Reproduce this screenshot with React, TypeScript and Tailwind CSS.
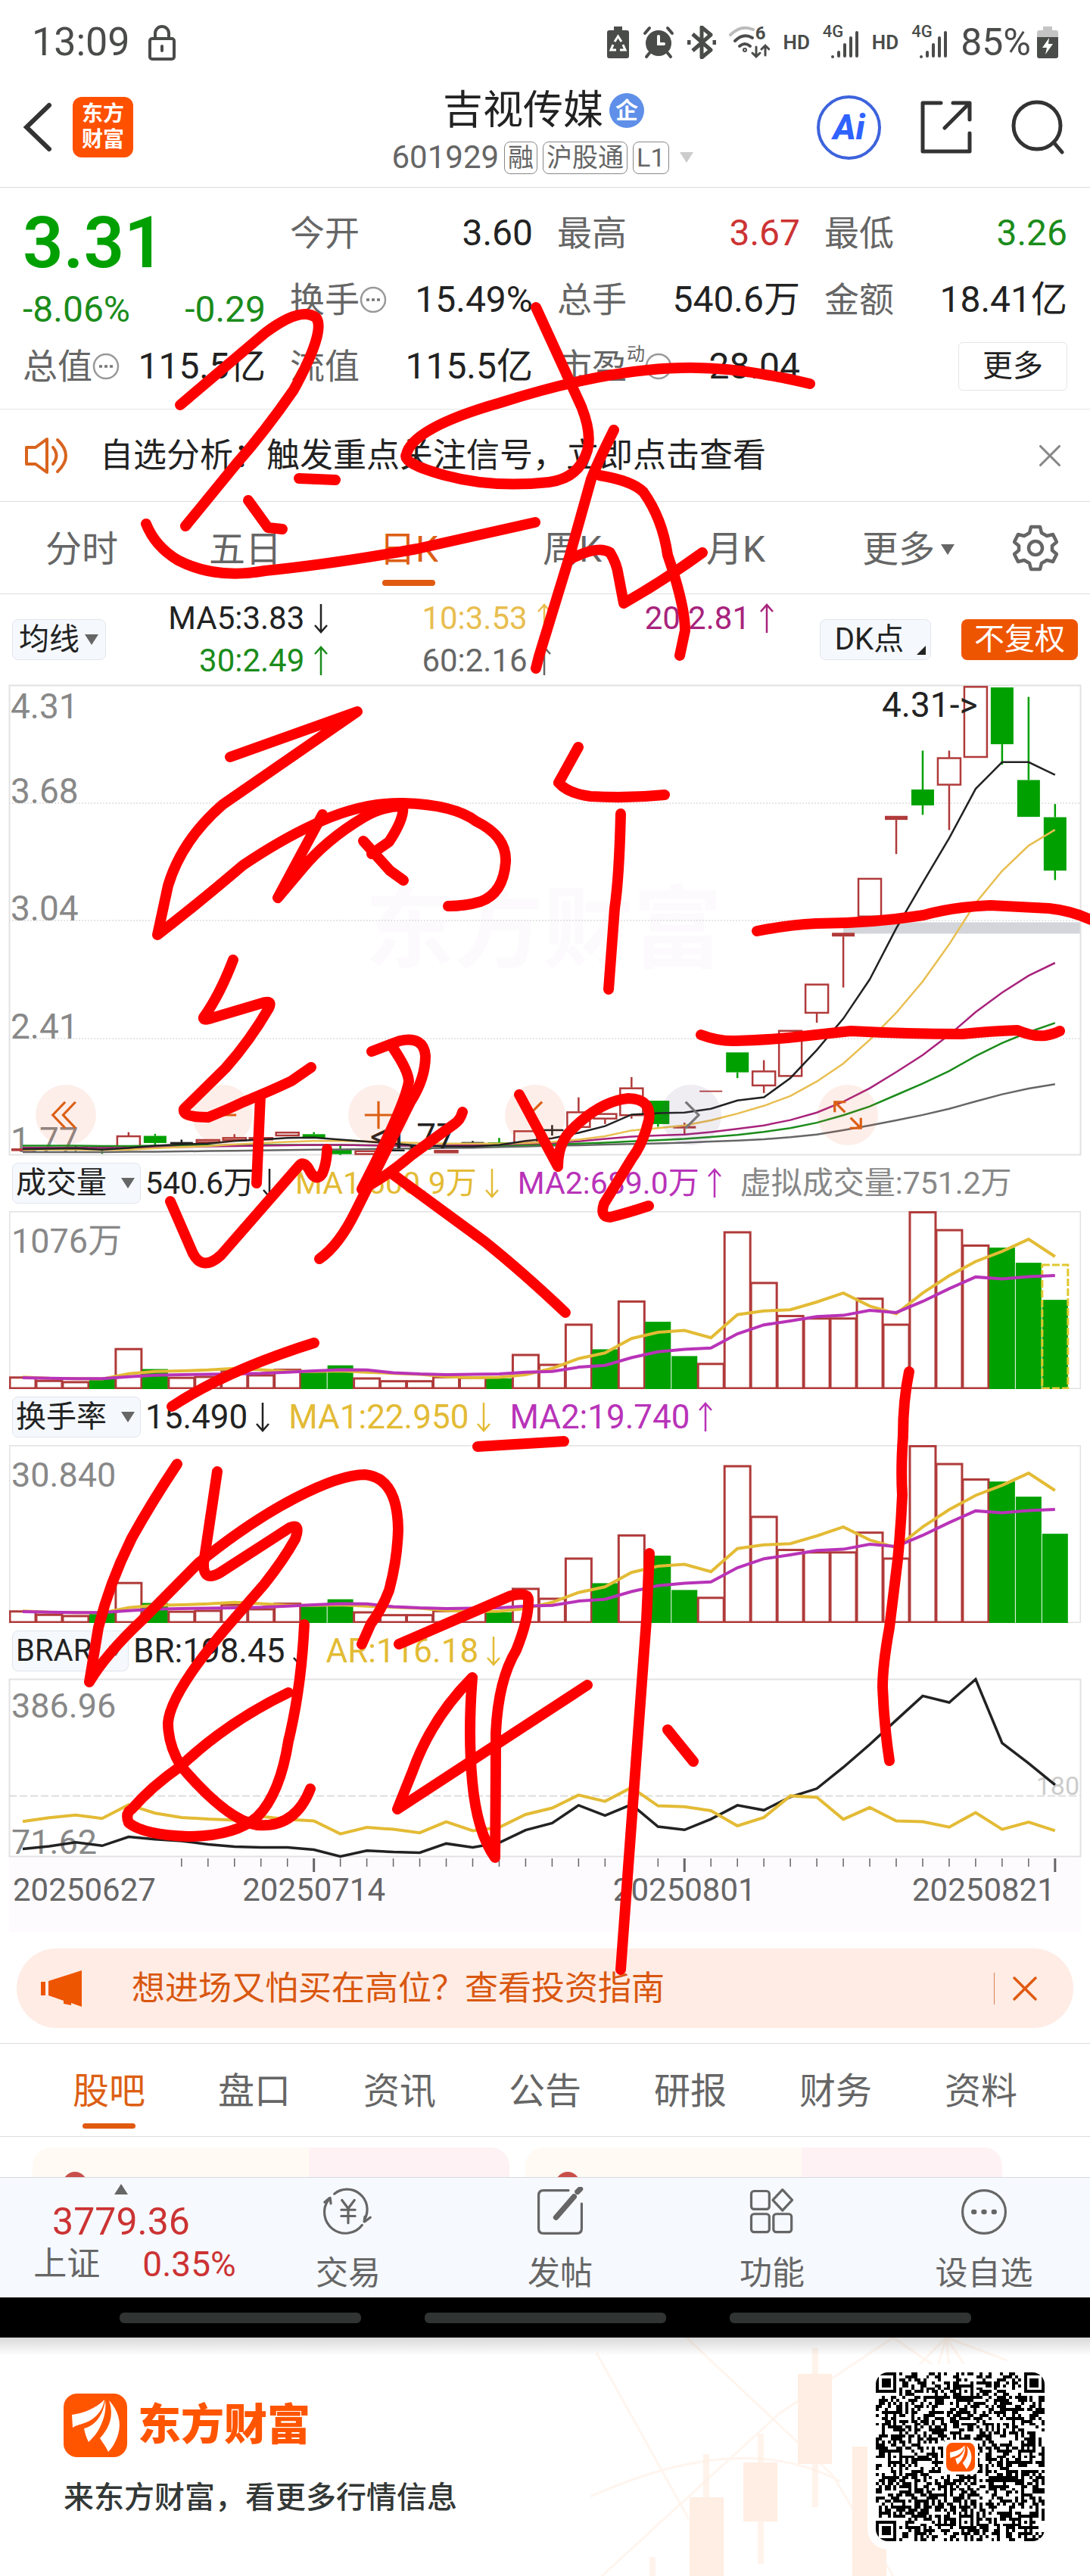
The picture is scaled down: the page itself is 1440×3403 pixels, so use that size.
import type { ReactNode } from 'react';
import clsx from 'clsx';
import { X } from 'lucide-react';

const STEP = 34.97;
const CHART_W = 1416;
const RED = '#b03a3a';
const GREEN = '#00a000';
const INK = '#222222';
const YELLOW = '#e3bb35';
const PURPLE = '#b833b8';

const xAt = (i: number) => 18 + i * STEP;

type Candle = {
  kind: 'up' | 'down' | 'bar' | 'flat';
  top: number;
  bottom: number;
  high?: number;
  low?: number;
};

const CANDLES: Candle[] = [
  { kind: 'bar', top: 1426, bottom: 1434 },
  { kind: 'flat', top: 1428, bottom: 1428 },
  { kind: 'flat', top: 1424, bottom: 1424, high: 1418, low: 1434 },
  { kind: 'down', top: 1418, bottom: 1424, low: 1442 },
  { kind: 'up', top: 1388, bottom: 1430, high: 1378 },
  { kind: 'down', top: 1389, bottom: 1410, high: 1383, low: 1416 },
  { kind: 'flat', top: 1410, bottom: 1410, high: 1400, low: 1416 },
  { kind: 'up', top: 1399, bottom: 1410 },
  { kind: 'up', top: 1393, bottom: 1404, high: 1384 },
  { kind: 'up', top: 1393, bottom: 1399 },
  { kind: 'up', top: 1377, bottom: 1390 },
  { kind: 'down', top: 1384, bottom: 1397, high: 1378 },
  { kind: 'down', top: 1428, bottom: 1443, high: 1414, low: 1446 },
  { kind: 'up', top: 1432, bottom: 1445 },
  { kind: 'flat', top: 1432, bottom: 1432, high: 1424 },
  { kind: 'down', top: 1424, bottom: 1430 },
  { kind: 'up', top: 1431, bottom: 1440 },
  { kind: 'flat', top: 1410, bottom: 1410, high: 1404, low: 1416 },
  { kind: 'down', top: 1408, bottom: 1412, high: 1395 },
  { kind: 'up', top: 1373, bottom: 1412 },
  { kind: 'flat', top: 1372, bottom: 1372, high: 1357, low: 1388 },
  { kind: 'up', top: 1317, bottom: 1365, high: 1275 },
  { kind: 'up', top: 1322, bottom: 1340, low: 1354 },
  { kind: 'up', top: 1246, bottom: 1330, high: 1215, low: 1338 },
  { kind: 'down', top: 1285, bottom: 1354, low: 1362 },
  { kind: 'bar', top: 1360, bottom: 1367, high: 1350, low: 1384 },
  { kind: 'bar', top: 1255, bottom: 1259 },
  { kind: 'down', top: 1142, bottom: 1201, low: 1218 },
  { kind: 'up', top: 1196, bottom: 1242, high: 1165, low: 1262 },
  { kind: 'up', top: 1076, bottom: 1214 },
  { kind: 'up', top: 939, bottom: 1027, low: 1054 },
  { kind: 'bar', top: 788, bottom: 799, low: 950 },
  { kind: 'up', top: 626, bottom: 742 },
  { kind: 'bar', top: 442, bottom: 454, low: 555 },
  { kind: 'down', top: 364, bottom: 411, high: 249, low: 439 },
  { kind: 'up', top: 269, bottom: 352, high: 249, low: 484 },
  { kind: 'up', top: 58, bottom: 270 },
  { kind: 'down', top: 62, bottom: 230, low: 290 },
  { kind: 'down', top: 336, bottom: 445, high: 90 },
  { kind: 'down', top: 446, bottom: 604, high: 407, low: 632 },
];

const MA_LINES = [
  {
    color: '#666666',
    points: [1437, 1437, 1437, 1437, 1436, 1436, 1435, 1434, 1433, 1432, 1431, 1430, 1429, 1428, 1427, 1426, 1425, 1424, 1422, 1420, 1418, 1417, 1415, 1413, 1411, 1409, 1406, 1403, 1399, 1393, 1385, 1372, 1358, 1343, 1327, 1309, 1287, 1266, 1249, 1236],
  },
  {
    color: '#1b8c1b',
    points: [1418, 1418, 1418, 1419, 1419, 1418, 1418, 1417, 1417, 1416, 1416, 1416, 1416, 1417, 1418, 1418, 1418, 1418, 1417, 1416, 1414, 1412, 1409, 1405, 1402, 1398, 1392, 1386, 1377, 1366, 1350, 1328, 1302, 1268, 1234, 1197, 1153, 1114, 1082, 1055],
  },
  {
    color: '#a8237c',
    points: [1424, 1424, 1424, 1425, 1424, 1423, 1422, 1420, 1419, 1418, 1417, 1416, 1416, 1417, 1418, 1418, 1418, 1417, 1415, 1412, 1410, 1405, 1398, 1391, 1388, 1385, 1378, 1368, 1358, 1342, 1320, 1288, 1248, 1200, 1150, 1090, 1023, 965, 915, 877],
  },
  {
    color: '#e8be50',
    points: [1430, 1430, 1430, 1431, 1430, 1426, 1422, 1419, 1414, 1410, 1407, 1404, 1404, 1406, 1408, 1410, 1412, 1412, 1412, 1410, 1407, 1400, 1390, 1373, 1366, 1358, 1343, 1323, 1300, 1271, 1228, 1175, 1105, 1025, 932, 822, 700, 605, 530, 483],
  },
  {
    color: INK,
    points: [1428, 1427, 1426, 1430, 1425, 1418, 1414, 1412, 1404, 1400, 1395, 1394, 1400, 1406, 1412, 1418, 1420, 1420, 1416, 1404, 1396, 1380, 1360, 1326, 1322, 1320, 1309, 1284, 1275, 1218, 1135, 1042, 926, 775, 640, 508, 362, 283, 283, 321],
  },
];

const VOLUME_TOPS = [707, 718, 722, 714, 615, 682, 708, 705, 686, 700, 682, 693, 670, 710, 719, 719, 706, 708, 712, 634, 666, 536, 618, 461, 529, 640, 663, 237, 401, 508, 516, 516, 452, 536, 172, 230, 280, 289, 338, 458];
const VOLUME_DOWN = [3, 5, 11, 12, 18, 22, 24, 25, 37, 38, 39];
const VOLUME_MA1 = [708, 712, 713, 714, 697, 690, 688, 685, 680, 684, 690, 690, 688, 692, 696, 699, 706, 710, 709, 700, 680, 648, 630, 583, 563, 557, 581, 506, 494, 490, 465, 436, 478, 503, 436, 380, 334, 301, 262, 318];
const VOLUME_MA2 = [710, 712, 713, 713, 707, 702, 700, 699, 698, 696, 692, 688, 684, 685, 694, 698, 700, 699, 698, 692, 690, 676, 670, 645, 626, 618, 614, 568, 539, 526, 512, 508, 492, 499, 463, 422, 384, 390, 383, 379];

const BR_LINE = [848, 838, 823, 836, 803, 812, 818, 831, 839, 842, 842, 851, 876, 854, 859, 862, 828, 842, 825, 778, 752, 686, 724, 683, 765, 777, 737, 686, 704, 655, 624, 545, 460, 370, 280, 304, 218, 455, 530, 610];
const AR_LINE = [746, 732, 722, 735, 684, 715, 731, 737, 741, 727, 738, 744, 792, 768, 775, 788, 747, 780, 768, 720, 696, 648, 671, 620, 688, 691, 706, 762, 731, 651, 656, 738, 694, 744, 747, 767, 713, 775, 748, 780];

const priceY = (v: number) => (v - 55) / 2.24;
const volumeY = (v: number) => (v - 171) / 2.45;
const brarY = (v: number) => (v - 217) / 2.81;

const toPoints = (values: number[], y: (v: number) => number) =>
  values.map((v, i) => `${xAt(i).toFixed(1)},${y(v).toFixed(1)}`).join(' ');

function Arrow({ up }: { up?: boolean }) {
  return (
    <svg viewBox="0 0 20 40" className="h-10 w-5 shrink-0" fill="none" stroke="currentColor" strokeWidth="2.5">
      <path d={up ? 'M10 39V2M2 11L10 2L18 11' : 'M10 1V38M2 29L10 38L18 29'} />
    </svg>
  );
}

function Triangle({ className }: { className?: string }) {
  return (
    <svg viewBox="0 0 18 14" className={clsx('h-3.5 shrink-0', className ?? 'w-[18px]')} fill="currentColor">
      <path d="M0 0H18L9 14Z" />
    </svg>
  );
}

function MoreDots() {
  return (
    <svg viewBox="0 0 36 36" className="size-9 shrink-0" fill="none" stroke="#999" strokeWidth="2.5">
      <circle cx="18" cy="18" r="16" />
      <path d="M9 18h4M16 18h4M23 18h4" stroke="#777" strokeWidth="3.5" />
    </svg>
  );
}

function BrandMark({ className }: { className?: string }) {
  return (
    <svg viewBox="0 0 84 84" className={className}>
      <rect width="84" height="84" rx="18" fill="#ff5500" />
      <g fill="#fff">
        <path d="M11 28C26 26 42 20 54 8C52 24 40 34 30 38C22 41 16 42 12 45Z" />
        <path d="M55 9C57 24 52 38 45 50C41 56 37 60 33 64C30 58 28 52 27 46C38 44 52 32 55 9Z" />
        <path d="M60 9C72 22 77 38 72 54C69 64 64 72 59 77C56 70 51 64 48 59C58 48 68 32 60 9Z" />
      </g>
    </svg>
  );
}

type PickerProps = { label: string; options: string[]; className: string; tight?: boolean };

function Picker({ label, options, className, tight }: PickerProps) {
  return (
    <span className={clsx('relative flex h-[54px] items-center', className)}>
      <select
        aria-label={label}
        className={clsx(
          'size-full appearance-none rounded-lg border border-[#e1e5eb] bg-[#f5f9fe] text-[40px] leading-[50px] text-[#222]',
          tight ? 'pl-2' : 'pl-1'
        )}
      >
        {options.map((o) => (
          <option key={o}>{o}</option>
        ))}
      </select>
      <Triangle className={clsx('pointer-events-none absolute w-[18px] text-[#666]', tight ? 'right-2.5' : 'right-2')} />
    </span>
  );
}

/* ---------- status bar ---------- */

function Signal() {
  return (
    <span className="relative block h-11 w-12 text-[#4a4c4a]">
      <span className="absolute -top-1 left-0 text-[22px] font-medium leading-6">4G</span>
      <svg viewBox="0 0 48 44" className="size-full" stroke="currentColor" strokeWidth="4" strokeLinecap="round">
        <path d="M13 41v0M21 40V35M29 40V25M37 40V16M45 40V9" />
      </svg>
    </span>
  );
}

function StatusBar() {
  return (
    <div className="flex h-[108px] items-center justify-between px-[42px] pt-1 text-[#4a4c4a]">
      <div className="flex items-center gap-6">
        <span className="text-[52px]">13:09</span>
        <svg viewBox="0 0 36 48" className="h-12 w-9" fill="none" stroke="currentColor" strokeWidth="4">
          <rect x="2" y="19" width="32" height="27" rx="3" />
          <path d="M9 18V12a9 9 0 0 1 18 0v6M18 29v6" strokeLinecap="round" />
        </svg>
      </div>
      <div className="flex items-center gap-[17px]">
        <svg viewBox="0 0 31 44" className="h-11 w-[31px]">
          <path d="M10 1h11v5h6q3 0 3 3v31q0 3-3 3H4q-3 0-3-3V9q0-3 3-3h6Z" fill="currentColor" />
          <path d="M11 21L15.500 14L20 21M22 25l3 7H18M9 25l-3 7h7" fill="none" stroke="#fff" strokeWidth="3" />
        </svg>
        <svg viewBox="0 0 42 44" className="h-11 w-[42px]" stroke="currentColor" strokeWidth="4" strokeLinecap="round">
          <circle cx="21" cy="23" r="15" fill="currentColor" />
          <path d="M3 10l6-7M39 10l-6-7M9 36l-4 5M33 36l4 5" />
          <path d="M21 14v10h7" fill="none" stroke="#fff" />
        </svg>
        <svg viewBox="0 0 38 44" className="h-11 w-[38px]" fill="none" stroke="currentColor" strokeWidth="5" strokeLinejoin="round">
          <path d="M7 11L31 32L19 42V2L31 12L7 33" />
          <path d="M2 19v6M36 19v6" />
        </svg>
        <span className="relative block h-11 w-[54px]">
          <svg viewBox="0 0 54 44" className="size-full" fill="none" stroke="currentColor" strokeWidth="4" strokeLinecap="round">
            <path d="M2 12Q16 -2 32 5" stroke="#bbb" />
            <path d="M8 20Q19 9 31 16M14 27q7-6 14 0" />
            <circle cx="21" cy="32" r="1" />
            <path d="M36 28v13m-5-5l5 5 5-5M48 39V26m-5 5l5-5 5 5" strokeWidth="3" />
          </svg>
          <span className="absolute -top-1 right-1.5 text-2xl font-bold leading-7">6</span>
        </span>
        <span className="text-[26px] font-semibold">HD</span>
        <Signal />
        <span className="text-[26px] font-semibold">HD</span>
        <Signal />
        <span className="flex items-center gap-2">
          <span className="text-[50px]">85%</span>
          <svg viewBox="0 0 28 44" className="h-11 w-7">
            <path d="M8 1h12v5h5q3 0 3 3v6H0V9q0-3 3-3h5Z" fill="#c4c4c4" />
            <path d="M0 15h28v25q0 3-3 3H3q-3 0-3-3Z" fill="currentColor" />
            <path d="M16 16L7 29h6l-2 9 10-14h-6Z" fill="#fff" />
          </svg>
        </span>
      </div>
    </div>
  );
}

/* ---------- title bar ---------- */

function Tag({ children }: { children: ReactNode }) {
  return (
    <span className="flex h-[43px] items-center rounded-lg border border-[#888] px-1 text-[34px] text-[#666]">
      {children}
    </span>
  );
}

function TitleBar() {
  return (
    <header className="flex items-center border-b border-[#ddd] pb-[7px] pl-[30px] pr-[34px] pt-1">
      <div className="flex flex-1 items-center gap-[26px] pb-4">
        <button aria-label="返回">
          <svg viewBox="0 0 40 66" className="h-[66px] w-10" fill="none" stroke="#333" strokeWidth="6" strokeLinecap="round">
            <path d="M35 4L5 33L35 62" />
          </svg>
        </button>
        <a
          href="#home"
          className="flex size-20 flex-col items-center justify-center rounded-xl bg-[#ff5000] text-[28px] font-bold leading-[34px] text-white"
        >
          <span>东方</span>
          <span>财富</span>
        </a>
      </div>
      <div className="flex flex-col items-center">
        <h1 className="flex h-16 items-center gap-2 pt-1 text-[53px] text-[#222]">
          吉视传媒
          <span className="flex size-[46px] items-center justify-center rounded-full bg-[#5f8fe8] text-[30px] font-bold text-white">
            企
          </span>
        </h1>
        <div className="flex h-16 items-center gap-[7px] text-[42px] text-[#666]">
          601929
          <Tag>融</Tag>
          <Tag>沪股通</Tag>
          <Tag>L1</Tag>
          <Triangle className="ml-1 w-6 text-[#ccc]" />
        </div>
      </div>
      <div className="flex flex-1 items-center justify-end gap-[52px] pb-4">
        <button
          aria-label="Ai"
          className="flex size-[85px] items-center justify-center rounded-full border-4 border-[#3d63dc] text-[46px] font-extrabold italic text-[#2f62ff]"
        >
          Ai
        </button>
        <button aria-label="分享">
          <svg viewBox="0 0 68 70" className="h-[70px] w-[68px]" fill="none" stroke="#333" strokeWidth="5" strokeLinecap="round" strokeLinejoin="round">
            <path d="M27 3H3V67H65V43M43 3H65V25M64 4L32 36" />
          </svg>
        </button>
        <button aria-label="搜索">
          <svg viewBox="0 0 70 72" className="h-[72px] w-[70px]" fill="none" stroke="#333" strokeWidth="5" strokeLinecap="round">
            <circle cx="34" cy="34" r="31" />
            <path d="M56 56L67 69" />
          </svg>
        </button>
      </div>
    </header>
  );
}

/* ---------- quote ---------- */

type StatProps = { label: ReactNode; value: string; tone?: 'up' | 'down'; dots?: boolean };

function Stat({ label, value, tone, dots }: StatProps) {
  return (
    <div className="flex h-[88px] items-center justify-between whitespace-nowrap">
      <span className="flex items-center text-[46px] text-[#666]">
        {label}
        {dots && <MoreDots />}
      </span>
      <span
        className={clsx(
          'text-[48px]',
          tone === 'up' && 'text-[#cc3333]',
          tone === 'down' && 'text-[#1b8c1b]',
          !tone && 'text-[#222]'
        )}
      >
        {value}
      </span>
    </div>
  );
}

function Quote() {
  return (
    <section className="grid grid-cols-4 gap-x-8 border-b border-[#e6e6e6] px-[30px] pb-3 pt-4">
      <div className="row-span-2">
        <p className="text-[94px] font-semibold leading-[114px] text-[#00a000]">3.31</p>
        <p className="flex justify-between text-[48px] leading-[62px] text-[#1b8c1b]">
          <span>-8.06%</span>
          <span>-0.29</span>
        </p>
      </div>
      <Stat label="今开" value="3.60" />
      <Stat label="最高" value="3.67" tone="up" />
      <Stat label="最低" value="3.26" tone="down" />
      <Stat label="换手" value="15.49%" dots />
      <Stat label="总手" value="540.6万" />
      <Stat label="金额" value="18.41亿" />
      <Stat label="总值" value="115.5亿" dots />
      <Stat label="流值" value="115.5亿" />
      <Stat
        label={
          <>
            市盈<sup className="-top-4 text-2xl">动</sup>
          </>
        }
        value="28.04"
        dots
      />
      <div className="flex items-center justify-end">
        <button className="h-16 w-36 rounded-md border border-[#e5e5e5] text-[40px] text-[#222]">更多</button>
      </div>
    </section>
  );
}

function Notice() {
  return (
    <section className="flex h-[122px] items-center border-b border-[#ddd] pl-8 pr-7">
      <svg viewBox="0 0 60 50" className="h-[50px] w-[60px]" fill="none" stroke="#d8641e" strokeWidth="4" strokeLinejoin="round">
        <path d="M3 14H15L30 3V47L15 36H3Z" />
        <path d="M38 14q9 11 0 22M44 4q22 21 0 42" strokeLinecap="round" />
      </svg>
      <a href="#analysis" className="ml-10 flex-1 text-[44px] text-[#222]">
        自选分析：触发重点关注信号，立即点击查看
      </a>
      <button aria-label="关闭">
        <X className="size-[50px] text-[#888]" strokeWidth={1.5} />
      </button>
    </section>
  );
}

function PeriodTabs() {
  return (
    <nav className="flex h-[122px] items-center border-b border-[#ddd] text-[48px] text-[#666]">
      {['分时', '五日', '日K', '周K', '月K'].map((t) => (
        <a
          key={t}
          href="#kline"
          className={clsx('relative flex h-full w-[15%] items-center justify-center pt-1', t === '日K' && 'text-[#dc5f14]')}
        >
          {t}
          {t === '日K' && <span className="absolute bottom-2.5 h-2 w-[70px] rounded-sm bg-[#e05a10]" />}
        </a>
      ))}
      <button className="flex flex-1 items-center justify-center gap-2 pl-6 pt-1">
        更多
        <Triangle />
      </button>
      <button aria-label="设置" className="flex w-[10%] justify-center">
        <svg viewBox="0 0 60 62" className="h-[62px] w-[60px]" fill="none" stroke="#666" strokeWidth="4.500" strokeLinejoin="round">
          <path d="M24 3H36L38 11L45 15L53 13L58 23L52 28V34L58 39L53 49L45 47L38 51L36 59H24L22 51L15 47L7 49L2 39L8 34V28L2 23L7 13L15 15L22 11Z" />
          <circle cx="30" cy="31" r="9" />
        </svg>
      </button>
    </nav>
  );
}

const AVERAGES = [
  { text: 'MA5:3.83', up: false, tone: 'text-[#222]' },
  { text: '10:3.53', up: true, tone: 'text-[#e8be50]' },
  { text: '20:2.81', up: true, tone: 'text-[#a8237c]' },
  { text: '30:2.49', up: true, tone: 'text-[#1b8c1b]' },
  { text: '60:2.16', up: true, tone: 'text-[#666]' },
];

function AverageBar() {
  return (
    <div className="flex items-center px-4 py-1">
      <Picker label="主图指标" options={['均线']} className="w-[124px]" tight />
      <div className="grid flex-1 grid-cols-3">
        {AVERAGES.map((a) => (
          <span key={a.text} className={clsx('flex h-14 items-center justify-end gap-3 text-[42px]', a.tone)}>
            {a.text}
            <Arrow up={a.up} />
          </span>
        ))}
      </div>
      <button className="relative ml-15 h-[54px] w-[147px] rounded-lg border border-[#e1e5eb] bg-[#f5f9fe] pr-4 text-[40px] leading-[50px] text-[#222]">
        DK点
        <svg viewBox="0 0 12 12" className="absolute bottom-1.5 right-1.5 size-3">
          <path d="M12 0V12H0Z" fill="#222" />
        </svg>
      </button>
      <button className="ml-10 h-[54px] w-[154px] rounded-lg bg-[#ee5500] text-[40px] leading-[54px] text-white">不复权</button>
    </div>
  );
}

/* ---------- charts ---------- */

function CandleShape({ c, i }: { c: Candle; i: number }) {
  const x = xAt(i);
  const top = priceY(c.top);
  const bottom = priceY(c.bottom);
  const color = c.kind === 'down' ? GREEN : c.kind === 'flat' ? INK : RED;
  return (
    <g stroke={color} strokeWidth="2.5" fill="none">
      {c.high && <path d={`M${x} ${priceY(c.high)}V${top}`} />}
      {c.low && <path d={`M${x} ${bottom}V${priceY(c.low)}`} />}
      {c.kind === 'up' && <rect x={x - 15} y={top + 1} width="30" height={Math.max(bottom - top - 2, 2)} />}
      {(c.kind === 'down' || c.kind === 'bar') && (
        <rect x={x - 15} y={top} width="30" height={bottom - top} fill={color} stroke="none" />
      )}
      {c.kind === 'flat' && <path d={`M${x - 15} ${top}H${x + 15}`} />}
    </g>
  );
}

const FLOAT_ICONS = [
  'M21 3L3 22L21 41M36 3L18 22L36 41',
  'M2 22H42',
  'M2 22H42M22 2V42',
  'M32 3L13 22L32 41',
  'M14 3L33 22L14 41',
  'M3 18V3H19M4 4L18 18M41 26V41H25M40 40L26 26',
];
const FLOAT_LABELS = ['最左', '缩小', '放大', '左移', '右移', '全屏'];

function PriceChart() {
  return (
    <div className="relative mx-3">
      <svg viewBox={`0 0 ${CHART_W} 621`} className="block h-auto w-full overflow-visible">
        <text x="470" y="364" fontSize="118" fontWeight="700" fill="#fdfafd">
          东方财富
        </text>
        <rect x={xAt(31)} y={priceY(757)} width={CHART_W - xAt(31)} height="15" fill="#d3d5da" />
        <path d={`M0 156H${CHART_W}M0 311H${CHART_W}M0 467H${CHART_W}`} stroke="#ccc" strokeDasharray="2 2" />
        <rect x="0.5" y="0.5" width={CHART_W - 1} height="620" fill="none" stroke="#e2e2e2" strokeWidth="2" />
        <g fontSize="46" fill="#888">
          <text x="2" y="44">4.31</text>
          <text x="2" y="156">3.68</text>
          <text x="2" y="311">3.04</text>
          <text x="2" y="467">2.41</text>
          <text x="2" y="617">1.77</text>
        </g>
        {CANDLES.map((c, i) => (
          <CandleShape key={i} c={c} i={i} />
        ))}
        {MA_LINES.map((l) => (
          <polyline key={l.color} points={toPoints(l.points, priceY)} fill="none" stroke={l.color} strokeWidth="2.500" />
        ))}
        <g fontSize="46" fill={INK}>
          <text x="1153" y="42">{'4.31->'}</text>
          <text x="477" y="612">{'<1.77'}</text>
        </g>
      </svg>
      <div className="absolute bottom-[13px] left-[35px] flex w-[1113px] justify-between">
        {FLOAT_ICONS.map((d, i) => (
          <button
            key={d}
            aria-label={FLOAT_LABELS[i]}
            className={clsx(
              'flex size-20 items-center justify-center rounded-full',
              i === 4 ? 'bg-[#604880]/10 text-[#777]' : 'bg-[#f05a28]/10 text-[#dc5f14]'
            )}
          >
            <svg viewBox="0 0 44 44" className="size-10" fill="none" stroke="currentColor" strokeWidth="3.500">
              <path d={d} />
            </svg>
          </button>
        ))}
      </div>
    </div>
  );
}

function VolumeChart({ max, projected }: { max: string; projected?: boolean }) {
  return (
    <svg viewBox={`0 0 ${CHART_W} 235`} className="mx-3 block h-auto w-[calc(100%-24px)]">
      <rect x="0.5" y="0.5" width={CHART_W - 1} height="234" fill="none" stroke="#e2e2e2" strokeWidth="2" />
      <text x="3" y="55" fontSize="45" fill="#888">
        {max}
      </text>
      {VOLUME_TOPS.map((v, i) => {
        const y = volumeY(v);
        return VOLUME_DOWN.includes(i) ? (
          <rect key={i} x={xAt(i) - 17} y={y} width="34" height={235 - y} fill={GREEN} />
        ) : (
          <rect key={i} x={xAt(i) - 17} y={y + 1} width="34" height={233 - y} fill="none" stroke={RED} strokeWidth="3" />
        );
      })}
      {projected && (
        <rect x={xAt(39) - 17} y={volumeY(345)} width="34" height={234 - volumeY(345)} fill="none" stroke="#e0c830" strokeWidth="3" strokeDasharray="10 3" />
      )}
      <polyline points={toPoints(VOLUME_MA1, volumeY)} fill="none" stroke={YELLOW} strokeWidth="4" />
      <polyline points={toPoints(VOLUME_MA2, volumeY)} fill="none" stroke={PURPLE} strokeWidth="4" />
    </svg>
  );
}

function BrarChart() {
  const right = CHART_W - 2;
  return (
    <svg viewBox={`0 0 ${CHART_W} 235`} className="mx-3 block h-auto w-[calc(100%-24px)] overflow-visible">
      <rect x="0.5" y="0.5" width={CHART_W - 1} height="234" fill="none" stroke="#e2e2e2" strokeWidth="2" />
      <path d={`M0 154.500H${CHART_W}`} stroke="#ddd" strokeWidth="2" strokeDasharray="10 4" />
      <g fontSize="45" fill="#888">
        <text x="3" y="51">386.96</text>
        <text x="3" y="231">71.62</text>
      </g>
      <text x={right} y="153" fontSize="34" fill="#ccc" textAnchor="end">
        180
      </text>
      <polyline points={toPoints(BR_LINE, brarY)} fill="none" stroke={INK} strokeWidth="3.500" />
      <polyline points={toPoints(AR_LINE, brarY)} fill="none" stroke={YELLOW} strokeWidth="4" />
    </svg>
  );
}

function DateAxis() {
  const ticks = Array.from({ length: 34 }, (_, k) => k + 6);
  return (
    <svg viewBox={`0 0 ${CHART_W} 100`} className="mx-3 block h-auto w-[calc(100%-24px)] bg-[#fefbff]">
      {ticks.map((i) => {
        const major = [11, 25, 39].includes(i);
        return <path key={i} d={`M${xAt(i)} 2V${major ? 20 : 13}`} stroke="#666" strokeWidth={major ? 3 : 1.5} />;
      })}
      <g fontSize="42" fill="#666">
        <text x="5" y="58">20250627</text>
        <text x={xAt(11)} y="58" textAnchor="middle">20250714</text>
        <text x={xAt(25)} y="58" textAnchor="middle">20250801</text>
        <text x={xAt(39)} y="58" textAnchor="end">20250821</text>
      </g>
    </svg>
  );
}

type Reading = { text: string; tone: string; dir?: 'up' | 'down' };

function IndicatorBar({ name, width, size, readings }: { name: string; width: string; size: string; readings: Reading[] }) {
  return (
    <div className={clsx('flex h-[74px] items-center whitespace-nowrap pl-4', size)}>
      <Picker label="副图指标" options={[name]} className={width} />
      <div className="ml-1.5 flex items-center gap-6">
        {readings.map((r) => (
          <span key={r.text} className={clsx('flex items-center gap-2.5', r.tone)}>
            {r.text}
            {r.dir && <Arrow up={r.dir === 'up'} />}
          </span>
        ))}
      </div>
    </div>
  );
}

/* ---------- lower page ---------- */

function GuideBanner() {
  return (
    <aside className="mx-[22px] mb-5 mt-[21px] flex h-[105px] items-center rounded-full bg-[#feece5] pl-8 pr-9 text-[#d9570f]">
      <svg viewBox="0 0 56 48" className="h-12 w-14" fill="#ee5500">
        <path d="M0 15h6v18H0ZM10 14L54 0V48L40 43V46L30 44V40L10 33Z" />
      </svg>
      <a href="#guide" className="ml-16 flex-1 text-[44px]">
        想进场又怕买在高位？查看投资指南
      </a>
      <span className="h-[42px] w-px bg-[#d9804f]" />
      <button aria-label="关闭" className="ml-3">
        <X className="size-14 text-[#e05a10]" strokeWidth={1.5} />
      </button>
    </aside>
  );
}

function SectionTabs() {
  return (
    <nav className="grid h-[124px] grid-cols-7 border-y border-[#ddd] px-12 text-[48px] text-[#666]">
      {['股吧', '盘口', '资讯', '公告', '研报', '财务', '资料'].map((t, i) => (
        <a key={t} href="#section" className={clsx('relative flex items-center justify-center pt-1', i === 0 && 'text-[#dc5f14]')}>
          {t}
          {i === 0 && <span className="absolute bottom-2.5 h-[7px] w-[70px] rounded-sm bg-[#e05a10]" />}
        </a>
      ))}
    </nav>
  );
}

function FeedPeek() {
  return (
    <div className="flex h-[53px] gap-[21px] overflow-hidden pl-[43px] pt-3.5">
      {[0, 1].map((k) => (
        <div key={k} className="h-20 w-[630px] overflow-hidden rounded-3xl bg-[#fffaf4]">
          <div className="flex h-full">
            <span className="ml-10 mt-8 size-8 rounded-full bg-[#c9504a]" />
            <span className="ml-auto h-full w-[42%] bg-[#fff2f4]" />
          </div>
        </div>
      ))}
    </div>
  );
}

const NAV_ITEMS = [
  {
    label: '交易',
    icon: (
      <>
        <path d="M16 10A29 29 0 0 1 60 46M56 55A29 29 0 0 1 8 18M2 22L9 16M10 16L11 24M59 50L60 43M60 50L68 44" />
        <path d="M27 19L36 31L45 19M36 31V52M26 33H46M26 42H46" />
      </>
    ),
  },
  {
    label: '发帖',
    icon: (
      <>
        <path d="M48 5H12Q5 5 5 12V60Q5 67 12 67H60Q67 67 67 60V24" />
        <path d="M61 7L65 3M56 14L30 44" strokeWidth="8" />
      </>
    ),
  },
  {
    label: '功能',
    icon: (
      <>
        <rect x="6" y="6" width="26" height="26" rx="4" />
        <rect x="6" y="39" width="26" height="26" rx="4" />
        <rect x="38" y="39" width="26" height="26" rx="4" />
        <path d="M51 4L65 19L51 34L37 19Z" />
      </>
    ),
  },
  {
    label: '设自选',
    icon: (
      <>
        <circle cx="36" cy="36" r="31" />
        <path d="M21 36h1M35.500 36h1M50 36h1" strokeWidth="7" />
      </>
    ),
  },
];

function BottomNav() {
  return (
    <nav className="flex h-[159px] border-t border-[#d5dae0] bg-[#f6f9fe] text-[#666]">
      <a href="#index" className="flex w-2/9 flex-col items-center pt-2">
        <Triangle className="w-6 rotate-180" />
        <span className="text-[50px] leading-[72px] text-[#cc3333]">3779.36</span>
        <span className="flex items-center gap-14 pl-9 text-[44px] leading-10">
          上证
          <span className="text-[46px] text-[#cc3333]">0.35%</span>
        </span>
      </a>
      {NAV_ITEMS.map((n) => (
        <button key={n.label} className="flex flex-1 flex-col items-center pt-3">
          <svg viewBox="0 0 72 72" className="size-[70px]" fill="none" stroke="currentColor" strokeWidth="3.500" strokeLinecap="round" strokeLinejoin="round">
            {n.icon}
          </svg>
          <span className="mt-4 text-[43px] leading-[64px]">{n.label}</span>
        </button>
      ))}
    </nav>
  );
}

const QR = 57;

function qrPath() {
  let seed = 601929;
  const corners = [
    [0, 0],
    [QR - 7, 0],
    [0, QR - 7],
  ];
  const marks = [
    [28, 4], [48, 26], [4, 26], [28, 48], [48, 48],
  ];
  let d = '';
  for (let y = 0; y < QR; y++) {
    for (let x = 0; x < QR; x++) {
      seed = (seed * 1103515245 + 12345) % 2147483648;
      let on = (seed >> 16) % 2 === 0;
      for (const [cx, cy] of corners) {
        const ring = Math.max(Math.abs(x - cx - 3), Math.abs(y - cy - 3));
        if (ring <= 4) on = ring === 3 || ring <= 1;
      }
      for (const [cx, cy] of marks) {
        const ring = Math.max(Math.abs(x - cx - 2), Math.abs(y - cy - 2));
        if (ring <= 2) on = ring !== 1;
      }
      if (on) d += `M${x} ${y}h1v1h-1z`;
    }
  }
  return d;
}

function ShareFooter() {
  return (
    <footer className="relative flex items-center justify-between overflow-hidden bg-white pb-[46px] pl-[84px] pr-[60px] pt-[46px]">
      <svg viewBox="0 0 660 315" className="absolute right-0 top-0 h-full w-[660px]" fill="#ffeee3" stroke="#ffeee3">
        <path d="M127 0L320 182L400 315M15 315L250 100L400 0L560 110M8 20L130 240M470 0L430 40M470 0L455 50M470 0L475 50M470 0L500 45M470 0L550 30M0 210Q200 120 330 190" fill="none" strokeWidth="3" opacity="0.6" />
        <path d="M274 48h45v119h-45ZM202 165h45v78h-45ZM131 211h45v104h-45ZM346 144h45v171h-45Z" stroke="none" />
        <path d="M297 14V224M225 127V299M153 154V315M82 290V315" strokeWidth="8" opacity="0.7" />
      </svg>
      <div className="absolute inset-x-0 top-0 h-6 bg-linear-to-b from-black/15 to-transparent" />
      <div className="relative">
        <div className="flex items-center gap-3.5">
          <BrandMark className="size-[84px]" />
          <strong className="text-[57px] font-black leading-[84px] text-[#ff5500]">东方财富</strong>
        </div>
        <p className="mt-6 text-[40px] font-medium leading-[60px] text-[#333836]">来东方财富，看更多行情信息</p>
      </div>
      <div className="relative flex items-center justify-center rounded-2xl bg-white outline-[11px] outline-white">
        <svg viewBox={`0 0 ${QR} ${QR}`} className="size-[223px]" shapeRendering="crispEdges">
          <path d={qrPath()} />
        </svg>
        <span className="absolute rounded-md bg-white p-1">
          <BrandMark className="size-[38px]" />
        </span>
      </div>
    </footer>
  );
}

/* freehand notes written over the whole page */
const STROKES = [
  'M238 535L350 440Q398 404 418 420Q430 438 388 515Q350 570 312 613L245 695',
  'M328 661L354 697L373 699',
  'M395 632L443 634',
  'M193 692Q205 722 235 740Q285 766 350 754Q440 745 551 725L707 690',
  'M708 406L768 537Q782 572 776 595Q765 632 725 637Q650 645 588 628Q530 612 537 600Q545 565 661 532Q800 488 900 486Q975 484 1070 507',
  'M811 568Q790 610 781 633L753 733L712 867L708 883',
  'M792 628Q835 635 850 650Q875 685 882 733Q905 800 905 833L898 866',
  'M755 738Q790 720 806 730Q815 745 817 760L824 797Q880 765 928 730',
  'M304 1000L472 940L294 1063Q240 1110 222 1170L208 1235Q260 1195 321 1143Q370 1110 413 1090Q475 1060 533 1061Q600 1063 629 1085Q670 1105 668 1139Q665 1180 635 1191Q615 1197 592 1197',
  'M426 1076L367 1186L399 1148Q430 1110 480 1080Q505 1065 532 1065Q535 1080 514 1112L491 1128',
  'M480 1111L515 1150L533 1163',
  'M764 987L738 1034Q750 1048 780 1052Q830 1055 878 1050',
  'M820 1075Q818 1160 812 1200L804 1307',
  'M1000 1230Q1040 1222 1078 1220Q1150 1220 1220 1209Q1260 1198 1308 1196L1386 1200Q1415 1203 1441 1215',
  'M926 1367Q950 1376 972 1375Q1010 1374 1041 1371L1124 1362Q1200 1366 1271 1366Q1310 1362 1344 1361Q1365 1370 1381 1368Q1392 1366 1400 1362',
  'M308 1268Q290 1315 269 1344Q268 1348 276 1346L350 1324Q360 1322 355 1332Q330 1375 298 1411L243 1465Q240 1476 275 1476Q300 1466 321 1456Q360 1440 385 1428L411 1410',
  'M344 1447L339 1563',
  'M225 1587L255 1656Q268 1680 292 1658L395 1540Q402 1532 410 1548Q418 1562 426 1550Q432 1535 432 1518',
  'M491 1389L528 1375Q560 1368 562 1395Q562 1425 542 1456L470 1600Q448 1645 422 1663',
  'M519 1384Q540 1415 540 1429Q535 1460 478 1571Q510 1555 545 1525L600 1485Q608 1480 611 1469',
  'M520 1552L640 1640Q690 1680 747 1734',
  'M686 1446L737 1541Q737 1515 750 1498Q790 1455 830 1451Q862 1452 857 1480Q850 1510 835 1530L798 1590Q792 1608 806 1608Q830 1602 857 1593',
  'M227 1858Q300 1810 415 1774',
  'M631 1911L745 1904',
  'M1201 1812Q1193 1850 1193 1897Q1190 1940 1192 1975Q1190 2020 1186 2060L1175 2150Q1166 2200 1166 2229Q1168 2280 1175 2326',
  'M858 2052L854 2140L820 2602',
  'M882 2285L916 2327',
  'M234 1934Q200 1985 174 2032Q145 2090 130 2150L118 2222Q140 2185 188 2140L262 2065Q330 2010 390 1979Q450 1948 482 1948Q525 1952 526 2020Q525 2060 514 2101Q505 2125 490 2145L478 2172',
  'M287 1944L269 2065Q268 2090 290 2078L383 2018Q398 2012 390 2033Q375 2060 349 2093L308 2140Q225 2235 222 2276Q222 2305 239 2333Q300 2405 340 2411Q390 2415 410 2363',
  'M402 2146Q398 2230 381 2300Q370 2370 340 2400Q310 2426 248 2426Q190 2424 170 2408Q165 2395 174 2390Q200 2360 239 2333Q300 2275 381 2236',
  'M527 2172L675 2108Q700 2102 698 2116Q698 2140 682 2180Q658 2220 655 2290Q655 2370 654 2454Q630 2420 624 2354Q618 2290 624 2216Q570 2270 545 2340L525 2390L776 2226',
];

function Scribbles() {
  return (
    <svg
      viewBox="0 0 1440 3403"
      className="pointer-events-none absolute left-0 top-0 h-auto w-full"
      fill="none"
      stroke="#ff0000"
      strokeWidth="14"
      strokeLinecap="round"
      strokeLinejoin="round"
    >
      {STROKES.map((d) => (
        <path key={d} d={d} />
      ))}
    </svg>
  );
}

export default function App() {
  return (
    <div className="relative w-full overflow-hidden bg-white font-['Roboto','Noto_Sans_CJK_SC',sans-serif] leading-none">
      <StatusBar />
      <TitleBar />
      <main>
        <Quote />
        <Notice />
        <PeriodTabs />
        <AverageBar />
        <PriceChart />
        <IndicatorBar
          name="成交量"
          width="w-[170px]"
          size="text-[41px]"
          readings={[
            { text: '540.6万', tone: 'text-[#222]', dir: 'down' },
            { text: 'MA1:600.9万', tone: 'text-[#e3bb35]', dir: 'down' },
            { text: 'MA2:689.0万', tone: 'text-[#b833b8]', dir: 'up' },
            { text: '虚拟成交量:751.2万', tone: 'text-[#888]' },
          ]}
        />
        <VolumeChart max="1076万" projected />
        <IndicatorBar
          name="换手率"
          width="w-[170px]"
          size="text-[44px]"
          readings={[
            { text: '15.490', tone: 'text-[#222]', dir: 'down' },
            { text: 'MA1:22.950', tone: 'text-[#e3bb35]', dir: 'down' },
            { text: 'MA2:19.740', tone: 'text-[#b833b8]', dir: 'up' },
          ]}
        />
        <VolumeChart max="30.840" />
        <IndicatorBar
          name="BRAR"
          width="w-[154px]"
          size="text-[44px]"
          readings={[
            { text: 'BR:198.45', tone: 'text-[#222]', dir: 'down' },
            { text: 'AR:116.18', tone: 'text-[#e3bb35]', dir: 'down' },
          ]}
        />
        <BrarChart />
        <DateAxis />
        <GuideBanner />
        <SectionTabs />
        <FeedPeek />
      </main>
      <BottomNav />
      <div className="flex h-[53px] items-center justify-center gap-[84px] bg-black">
        <span className="h-3.5 w-[319px] rounded-md bg-[#303432]" />
        <span className="h-3.5 w-[319px] rounded-md bg-[#303432]" />
        <span className="h-3.5 w-[319px] rounded-md bg-[#303432]" />
      </div>
      <ShareFooter />
      <Scribbles />
    </div>
  );
}
